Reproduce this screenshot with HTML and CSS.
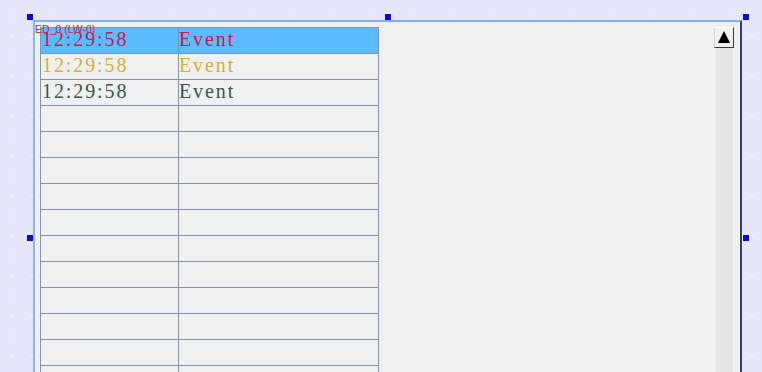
FILE: index.html
```html
<!DOCTYPE html>
<html>

<head>
    <meta charset="UTF-8">
    <title>Event List</title>
    <link rel="stylesheet" href="styles.css">
</head>

<body>
    <div class="canvas">
        <div class="panel">
            <span class="tag">ED_0 (LW-0)</span>
            <table class="list">
                <tr class="sel red"><td class="c1">12:29:58</td><td>Event</td></tr>
                <tr class="gold"><td class="c1">12:29:58</td><td>Event</td></tr>
                <tr class="green"><td class="c1">12:29:58</td><td>Event</td></tr>
                <tr><td class="c1"></td><td></td></tr>
                <tr><td class="c1"></td><td></td></tr>
                <tr><td class="c1"></td><td></td></tr>
                <tr><td class="c1"></td><td></td></tr>
                <tr><td class="c1"></td><td></td></tr>
                <tr><td class="c1"></td><td></td></tr>
                <tr><td class="c1"></td><td></td></tr>
                <tr><td class="c1"></td><td></td></tr>
                <tr><td class="c1"></td><td></td></tr>
                <tr><td class="c1"></td><td></td></tr>
                <tr><td class="c1"></td><td></td></tr>
            </table>
            <div class="scroll">
                <div class="up"><span class="tri"></span></div>
                <div class="track"></div>
            </div>
        </div>
        <span class="h h1"></span>
        <span class="h h2"></span>
        <span class="h h3"></span>
        <span class="h h4"></span>
        <span class="h h5"></span>
    </div>
</body>
</html>
```

FILE: styles.css
```css
* {
    margin: 0;
    padding: 0;
    box-sizing: border-box;
}
body {
    background-color: #e6e6f8;
    background-image: radial-gradient(circle, #f2f2fc 1px, transparent 1.2px);
    background-size: 20px 20px;
    background-position: 2px 6px;
    overflow: hidden;
}
.canvas {
    position: relative;
    width: 762px;
    height: 372px;
    overflow: hidden;
}

.panel {
    position: absolute;
    left: 33px;
    top: 20px;
    width: 709px;
    height: 352px;
    overflow: hidden;
    background: #f0f0f0;
    border-top: 2px solid #7db2ec;
    border-left: 2px solid #88b6ec;
    border-right: 2px solid #2e4262;
    padding: 5px 0 0 5px;
}

.tag {
    position: absolute;
    left: 0;
    top: 2px;
    font-family: "Liberation Sans", Arial, sans-serif;
    font-size: 10.5px;
    line-height: 11px;
    color: #d0203a;
    z-index: 2;
}

.list {
    border-collapse: collapse;
    font-family: "Liberation Serif", "Times New Roman", serif;
    font-size: 20px;
    letter-spacing: 1.9px;
}
.list td {
    border: 1px solid #7c92b6;
    height: 26px;
    width: 200px;
    padding: 0 0 3px 0;
    line-height: 22px;
    vertical-align: middle;
}
.list td.c1 {
    width: 138px;
    padding-left: 1px;
}
.sel td {
    background: #5abcff;
}
.red td {
    color: #c81a46;
}
.gold td {
    color: #d4b232;
}
.green td {
    color: #32584a;
}

.scroll {
    position: absolute;
    top: 5px;
    right: 6px;
    width: 20px;
    bottom: 0;
    display: flex;
    flex-direction: column;
}
.up {
    height: 21px;
    background: #f0f0f0;
    border-top: 1px solid #ffffff;
    border-left: 1px solid #d8d8d8;
    border-right: 1px solid #3a3a3a;
    border-bottom: 1px solid #3a3a3a;
    display: flex;
    align-items: center;
    justify-content: center;
}
.tri {
    width: 0;
    height: 0;
    border-left: 6px solid transparent;
    border-right: 6px solid transparent;
    border-bottom: 12px solid #000;
    margin-top: -1px;
}
.track {
    flex: 1;
    background: #e6e6e6;
    border-left: 1px solid #ffffff;
    border-right: 1px solid #f6f6f6;
}

.h {
    position: absolute;
    width: 6px;
    height: 6px;
    background: #0a0ae0;
}
.h1 { left: 27px; top: 14px; }
.h2 { left: 385px; top: 14px; }
.h3 { left: 743px; top: 14px; }
.h4 { left: 27px; top: 235px; }
.h5 { left: 743px; top: 235px; }
```
